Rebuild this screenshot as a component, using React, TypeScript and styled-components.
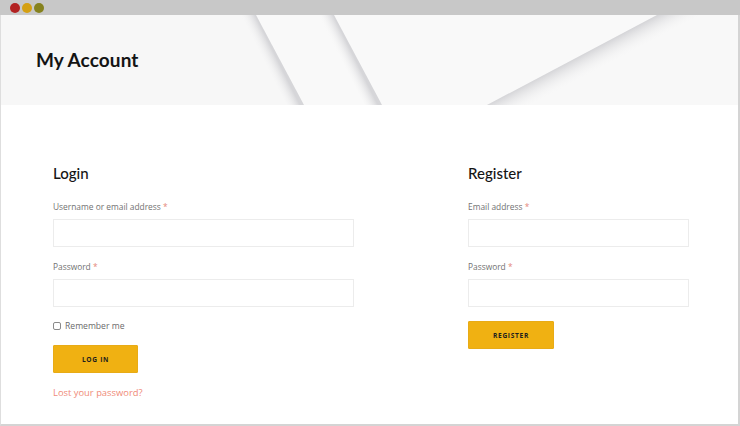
import styled, { createGlobalStyle } from "styled-components";

const GlobalStyle = createGlobalStyle`
  html, body {
    margin: 0;
    padding: 0;
    background: #ffffff;
  }
  * {
    box-sizing: border-box;
  }
`;

const Window = styled.div`
  width: 740px;
  height: 426px;
  display: flex;
  flex-direction: column;
  overflow: hidden;
  font-family: "Open Sans", "Liberation Sans", sans-serif;
`;

const TitleBar = styled.div`
  height: 15px;
  flex: none;
  background: #c8c8c8;
  display: flex;
  align-items: center;
  gap: 2px;
  padding-left: 10px;
`;

const Dot = styled.span<{ color: string }>`
  width: 10px;
  height: 10px;
  border-radius: 50%;
  background: ${(p) => p.color};
`;

const Page = styled.div`
  flex: 1;
  display: flex;
  flex-direction: column;
  border-left: 1px solid #dedede;
  border-right: 2px solid #d4d4d4;
  border-bottom: 2px solid #d4d4d4;
`;

const Hero = styled.header`
  position: relative;
  height: 90px;
  flex: none;
  background: #f7f7f7;
  display: flex;
  align-items: center;
  padding-left: 35px;
  overflow: hidden;
`;

const HeroArt = styled.svg`
  position: absolute;
  left: -1px;
  top: -15px;
  width: 740px;
  height: 105px;
`;

const PageTitle = styled.h1`
  position: relative;
  margin: 0 0 2px;
  font-family: Lato, "Noto Sans", sans-serif;
  font-weight: 700;
  font-size: 19px;
  color: #141414;
  letter-spacing: 0.1px;
`;

const Columns = styled.main`
  display: grid;
  grid-template-columns: 301px 221px;
  column-gap: 114px;
  padding: 58px 0 0 52px;
`;

const Column = styled.section`
  display: flex;
  flex-direction: column;
  align-items: flex-start;
`;

const Heading = styled.h2`
  margin: 0 0 17px;
  font-family: Lato, "Noto Sans", sans-serif;
  font-weight: 500;
  font-size: 15px;
  line-height: 20px;
  color: #151515;
`;

const Label = styled.label`
  display: block;
  font-size: 8.4px;
  line-height: 14px;
  color: #727272;
  margin-bottom: 5px;
`;

const Required = styled.span`
  color: #e4877a;
`;

const Input = styled.input<{ gapBelow?: number }>`
  display: block;
  width: 100%;
  height: 28px;
  border: 1px solid #ececec;
  background: #ffffff;
  margin-bottom: ${(p) => p.gapBelow ?? 13}px;
  outline: none;
`;

const CheckRow = styled.label`
  display: flex;
  align-items: center;
  gap: 4px;
  height: 14px;
  margin: -1px 0 12px;
  font-size: 8.6px;
  color: #6a6a6a;
`;

const Box = styled.span`
  width: 8px;
  height: 8px;
  border: 1px solid #8a8a8a;
  border-radius: 2px;
  background: #ffffff;
`;

const Button = styled.button<{ width: number }>`
  width: ${(p) => p.width}px;
  height: 28px;
  border: 1px solid #e8ab16;
  border-radius: 1px;
  background: #f0b112;
  color: #1e1e1e;
  font-family: "Open Sans", "Liberation Sans", sans-serif;
  font-weight: 700;
  font-size: 6.6px;
  letter-spacing: 0.7px;
  padding: 0;
`;

const LostLink = styled.a`
  margin-top: 13px;
  font-size: 9.4px;
  line-height: 14px;
  color: #ef8b78;
  text-decoration: none;
`;

// soft folded-paper shadows across the hero band
const HeroBackground = () => (
  <HeroArt viewBox="0 0 740 105" preserveAspectRatio="none">
    <defs>
      <linearGradient id="fold-a" gradientUnits="userSpaceOnUse" x1="243" y1="21" x2="255" y2="15">
        <stop offset="0" stopColor="#f7f7f7" stopOpacity="0" />
        <stop offset="1" stopColor="#d6d6d9" />
      </linearGradient>
      <linearGradient id="fold-b" gradientUnits="userSpaceOnUse" x1="321" y1="21" x2="333" y2="15">
        <stop offset="0" stopColor="#f7f7f7" stopOpacity="0" />
        <stop offset="1" stopColor="#d6d6d9" />
      </linearGradient>
      <linearGradient id="fold-c" gradientUnits="userSpaceOnUse" x1="657" y1="15" x2="667" y2="34">
        <stop offset="0" stopColor="#d4d4d7" />
        <stop offset="1" stopColor="#f7f7f7" stopOpacity="0" />
      </linearGradient>
    </defs>
    <rect x="0" y="0" width="740" height="105" fill="#f7f7f7" />
    <polygon points="256,15 740,15 740,105 304,105" fill="#f9f9f9" />
    <polygon points="239,15 256,15 304,105 287,105" fill="url(#fold-a)" />
    <polygon points="317,15 334,15 382,105 365,105" fill="url(#fold-b)" />
    <polygon points="657,15 740,15 740,105 487,105" fill="#f8f8f8" />
    <polygon points="657,15 700,15 530,105 487,105" fill="url(#fold-c)" />
  </HeroArt>
);

export default function App() {
  return (
    <>
      <GlobalStyle />
      <Window>
        <TitleBar>
          <Dot color="#b22222" />
          <Dot color="#d4a012" />
          <Dot color="#86821e" />
        </TitleBar>
        <Page>
          <Hero>
            <HeroBackground />
            <PageTitle>My Account</PageTitle>
          </Hero>
          <Columns>
            <Column>
              <Heading>Login</Heading>
              <Label>
                Username or email address <Required>*</Required>
              </Label>
              <Input type="text" />
              <Label>
                Password <Required>*</Required>
              </Label>
              <Input type="password" />
              <CheckRow>
                <Box />
                Remember me
              </CheckRow>
              <Button width={85}>LOG IN</Button>
              <LostLink href="#">Lost your password?</LostLink>
            </Column>
            <Column>
              <Heading>Register</Heading>
              <Label>
                Email address <Required>*</Required>
              </Label>
              <Input type="email" />
              <Label>
                Password <Required>*</Required>
              </Label>
              <Input type="password" gapBelow={14} />
              <Button width={86}>REGISTER</Button>
            </Column>
          </Columns>
        </Page>
      </Window>
    </>
  );
}
